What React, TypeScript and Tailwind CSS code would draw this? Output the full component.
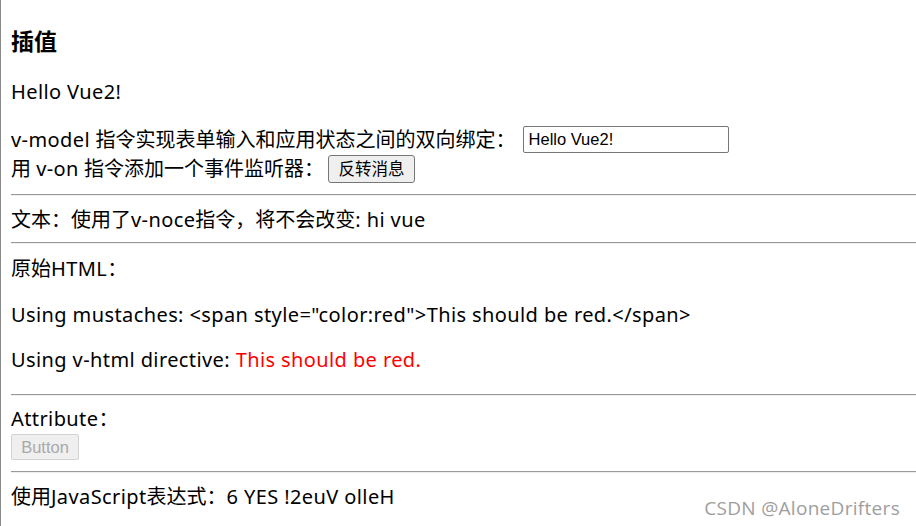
import React from "react";

const font = { fontFamily: '"Noto Sans", "Noto Sans CJK SC", sans-serif' };

// latin runs are a touch wider in the original font
function L({ children }: { children: React.ReactNode }) {
  return <span className="tracking-[0.4px]">{children}</span>;
}

function Hr({ className = "" }: { className?: string }) {
  return <div className={"h-[2px] border-t border-b border-t-[#9a9a9a] border-b-[#eeeeee] " + className} />;
}

export default function App() {
  const msg = "Hello Vue2!";
  return (
    <div className="relative h-[526px] w-[916px] overflow-hidden border-l border-[#8a8a8a] bg-white text-[20px] leading-[26px] text-black" style={font}>
      <div className="pl-[10px]">
        <h3 className="pt-[26px] text-[23px] font-bold leading-[30px]">插值</h3>
        <p className="mt-[23px]">
          <L>{msg}</L>
        </p>
        <div className="mt-[19px] flex h-[31px] items-center">
          <span>
            <L>v-model </L>指令实现表单输入和应用状态之间的双向绑定：
          </span>
          <input
            readOnly
            value={msg}
            className="ml-[7px] h-[27px] w-[206px] rounded-[2px] border border-[#767676] px-[5px] text-[16.5px] text-black outline-none"
            style={{ fontFamily: '"Liberation Sans", Arial, sans-serif' }}
          />
        </div>
        <div className="flex h-[28px] items-center">
          <span>
            用 <L>v-on</L> 指令添加一个事件监听器：
          </span>
          <button
            type="button"
            className="ml-[4px] h-[28px] w-[87px] rounded-[3px] border border-[#767676] bg-[#efefef] text-[16.5px] leading-none"
          >
            反转消息
          </button>
        </div>
        <Hr className="mt-[11px]" />
        <p className="mt-[11px]">
          文本：使用了<L>v-noce</L>指令，将不会改变<L>: hi vue</L>
        </p>
        <Hr className="mt-[9px]" />
        <p className="mt-[12px]">
          原始<L>HTML</L>：
        </p>
        <p className="mt-[20px]">
          <L>Using mustaches: &lt;span style="color:red"&gt;This should be red.&lt;/span&gt;</L>
        </p>
        <p className="mt-[19px]">
          <L>
            Using v-html directive: <span className="text-[#ff0000]">This should be red.</span>
          </L>
        </p>
        <Hr className="mt-[21px]" />
        <p className="mt-[10px]">
          <L>Attribute</L>：
        </p>
        <button
          type="button"
          disabled
          className="mt-[2px] block h-[26px] w-[68px] rounded-[2px] border border-[#d3d3d3] bg-[#efefef] text-[16.5px] leading-none text-[#a9a9a9]"
          style={{ fontFamily: '"Liberation Sans", Arial, sans-serif' }}
        >
          Button
        </button>
        <Hr className="mt-[11px]" />
        <p className="mt-[11px]">
          使用<L>JavaScript</L>表达式：<L>6 YES !2euV olleH</L>
        </p>
      </div>
      <div
        className="absolute right-[16px] top-[495px] text-[19px] leading-[26px] tracking-[0.3px] text-[#9e9e9e]"
        style={{ fontFamily: '"Open Sans", sans-serif' }}
      >
        CSDN @AloneDrifters
      </div>
    </div>
  );
}
